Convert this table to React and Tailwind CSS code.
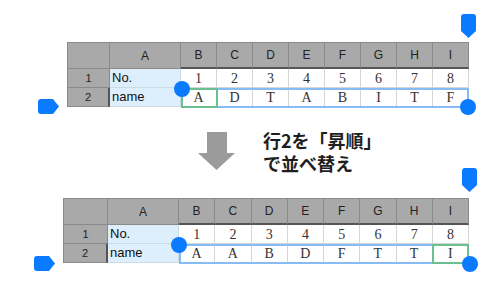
import React from 'react';

const COLS = ['B', 'C', 'D', 'E', 'F', 'G', 'H', 'I'];

function LeftHandle({ className }) {
    return (
        <svg className={className} width="21" height="15" viewBox="0 0 21 15">
            <path d="M3 0 H15 L21 7.5 L15 15 H3 Q0 15 0 12 V3 Q0 0 3 0 Z" fill="#0a7bff" />
        </svg>
    );
}

function TopHandle({ className }) {
    return (
        <svg className={className} width="15" height="24" viewBox="0 0 15 24">
            <path d="M0 3 Q0 0 3 0 H12 Q15 0 15 3 V17 L7.5 24 L0 17 Z" fill="#0a7bff" />
        </svg>
    );
}

function Sheet({ numbers, names, headW, className, overlays }) {
    return (
        <div className={`relative ${className}`}>
            {/* column header row */}
            <div className="flex h-[27px] border-t border-[#8a8a8a]">
                <div className={`${headW} shrink-0 bg-[#a9a9a9] border-l border-r border-b border-[#8a8a8a]`} />
                <div className="w-[71px] shrink-0 bg-[#a9a9a9] border-r border-b border-[#8a8a8a] flex items-center justify-center text-[12px] text-[#222]">A</div>
                {COLS.map((c) => (
                    <div key={c} className="flex-1 bg-[#a9a9a9] border-r border-[#8a8a8a] border-b-2 border-b-[#555] flex items-center justify-center text-[12px] text-[#222]">{c}</div>
                ))}
            </div>

            {/* row 1 */}
            <div className="flex h-[19px]">
                <div className={`${headW} shrink-0 bg-[#a9a9a9] border-l border-r border-b border-[#8a8a8a] flex items-center justify-center text-[11px] text-[#222]`}>1</div>
                <div className="w-[71px] shrink-0 bg-[#ddeffc] border-r border-b border-[#cbdbe6] flex items-center pl-[2px] text-[13px] text-[#111]">No.</div>
                {numbers.map((n, i) => (
                    <div key={i} className="flex-1 bg-white border-r border-b border-[#d6d6d6] flex items-center justify-center text-[14px] text-[#333] [font-family:'Liberation_Serif',serif]">{n}</div>
                ))}
            </div>

            {/* row 2 */}
            <div className="flex h-[19px]">
                <div className={`${headW} shrink-0 bg-[#a9a9a9] border-l border-b border-[#8a8a8a] border-r-2 border-r-[#555] flex items-center justify-center text-[11px] text-[#222]`}>2</div>
                <div className="w-[71px] shrink-0 bg-[#ddeffc] border-r border-b border-[#cbdbe6] flex items-center pl-[2px] text-[13px] text-[#111]">name</div>
                {names.map((n, i) => (
                    <div key={i} className="flex-1 bg-white border-r border-b border-[#d6d6d6] flex items-center justify-center text-[14px] text-[#333] [font-family:'Liberation_Serif',serif]">{n}</div>
                ))}
            </div>

            {overlays}
        </div>
    );
}

export default function App() {
    return (
        <div className="w-[500px] h-[297px] bg-white overflow-hidden flex flex-col pt-[42px] [font-family:'Liberation_Sans',Arial,sans-serif]">
            {/* before */}
            <Sheet
                className="ml-[67px] w-[402px]"
                headW="w-[43px]"
                numbers={['1', '2', '3', '4', '5', '6', '7', '8']}
                names={['A', 'D', 'T', 'A', 'B', 'I', 'T', 'F']}
                overlays={
                    <>
                        <div className="absolute left-[114px] top-[46px] w-[288px] h-[20px] border-2 border-[#86bbf3]" />
                        <div className="absolute left-[114px] top-[46px] w-[37px] h-[20px] border-2 border-[#6cbf90]" />
                        <div className="absolute left-[107px] top-[39px] w-[16px] h-[16px] rounded-full bg-[#0a7bff]" />
                        <div className="absolute left-[393px] top-[57px] w-[16px] h-[16px] rounded-full bg-[#0a7bff]" />
                        <LeftHandle className="absolute left-[-29px] top-[57px]" />
                        <TopHandle className="absolute left-[394px] top-[-28px]" />
                    </>
                }
            />

            {/* arrow + caption */}
            <div className="h-[91px] flex items-start pl-[198px] pt-[25px] gap-[28px]">
                <svg width="37" height="38" viewBox="0 0 37 38">
                    <path d="M9 0 H29 V21 H37 L18.5 38 L0 21 H9 Z" fill="#9b9b9b" />
                </svg>
                <div className="-mt-[2px] flex flex-col gap-[2px] text-[18px] leading-[21px] font-bold text-[#1e1e1e] [font-family:'Noto_Sans_CJK_JP','Noto_Sans',sans-serif]">
                    <div>行2を「昇順」</div>
                    <div>で並べ替え</div>
                </div>
            </div>

            {/* after */}
            <Sheet
                className="ml-[63px] w-[406px]"
                headW="w-[45px]"
                numbers={['1', '2', '3', '4', '5', '6', '7', '8']}
                names={['A', 'A', 'B', 'D', 'F', 'T', 'T', 'I']}
                overlays={
                    <>
                        <div className="absolute left-[116px] top-[46px] w-[290px] h-[20px] border-2 border-[#86bbf3]" />
                        <div className="absolute left-[369px] top-[46px] w-[37px] h-[20px] border-2 border-[#6cbf90]" />
                        <div className="absolute left-[108px] top-[39px] w-[16px] h-[16px] rounded-full bg-[#0a7bff]" />
                        <div className="absolute left-[399px] top-[58px] w-[16px] h-[16px] rounded-full bg-[#0a7bff]" />
                        <LeftHandle className="absolute left-[-29px] top-[58px]" />
                        <TopHandle className="absolute left-[399px] top-[-30px]" />
                    </>
                }
            />
        </div>
    );
}
